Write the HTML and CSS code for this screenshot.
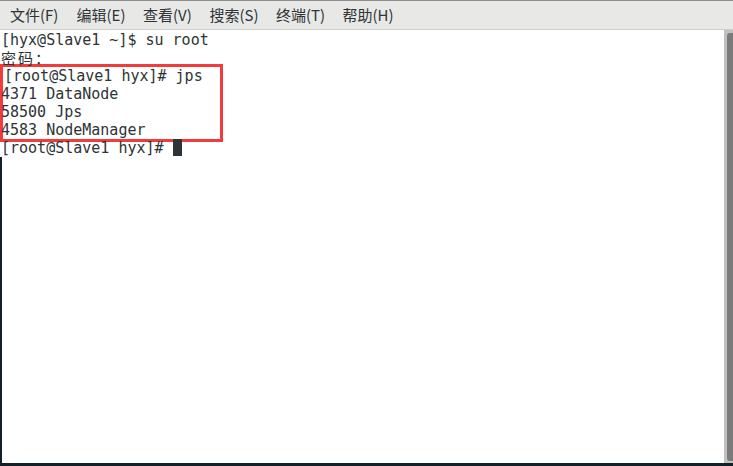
FILE: index.html
```html
<!DOCTYPE html>
<html lang="zh">
<head>
<meta charset="utf-8">
<title>终端</title>
<link rel="stylesheet" href="styles.css">
</head>
<body>
<div class="window">
  <div class="menubar">
    <span class="menu-item">文件(F)</span>
    <span class="menu-item">编辑(E)</span>
    <span class="menu-item">查看(V)</span>
    <span class="menu-item">搜索(S)</span>
    <span class="menu-item">终端(T)</span>
    <span class="menu-item">帮助(H)</span>
  </div>
  <div class="terminal">
    <div class="screen">
      <div class="line">[hyx@Slave1 ~]$ su root</div>
      <div class="line cjk">密码：</div>
      <div class="highlight">
        <div class="line">[root@Slave1 hyx]# jps</div>
        <div class="line">4371 DataNode</div>
        <div class="line">58500 Jps</div>
        <div class="line">4583 NodeManager</div>
      </div>
      <div class="line">[root@Slave1 hyx]# <span class="cursor"></span></div>
    </div>
    <div class="scrollbar"><div class="thumb"></div></div>
  </div>
</div>
<div class="desk-edge"></div>
</body>
</html>
```
FILE: styles.css
```css
html, body {
  margin: 0;
  padding: 0;
}
body {
  width: 733px;
  height: 466px;
  overflow: hidden;
  background: #13202a;
  position: relative;
}
.window {
  height: 463px;
  display: flex;
  flex-direction: column;
  background: #ffffff;
}
.menubar {
  height: 28px;
  border-top: 1px solid #8f8f8f;
  border-bottom: 1px solid #cfcfcd;
  background: #e8e8e7;
  display: flex;
  align-items: center;
  padding-left: 10px;
  gap: 16px;
  font-family: "Noto Sans CJK SC", "Noto Sans", sans-serif;
  font-size: 15px;
  color: #2e3436;
}
.menu-item {
  width: 50.5px;
  white-space: nowrap;
  line-height: 28px;
}
.terminal {
  flex: 1;
  display: flex;
  min-height: 0;
}
.screen {
  flex: 1;
  padding-top: 1px;
  padding-left: 1px;
  font-family: "DejaVu Sans Mono", "Noto Sans CJK SC", monospace;
  font-size: 15px;
  color: #2e3436;
}
.line {
  height: 18px;
  line-height: 18px;
  white-space: pre;
}
.cjk {
  font-family: "Noto Sans CJK SC", sans-serif;
  letter-spacing: 2px;
}
.highlight {
  width: 216px;
  margin-left: -1px;
  border: 3px solid #f43a3a;
  margin-top: -3px;
  margin-bottom: -3px;
  padding-left: 1px;
  margin-right: 0;
}
.highlight .line {
  margin-left: -3px;
}
.highlight .line:first-child {
  padding-left: 3px;
}
.cursor {
  display: inline-block;
  width: 9px;
  height: 17px;
  background: #2e3436;
  vertical-align: top;
}
.scrollbar {
  width: 9px;
  background: #c1c1c0;
  display: flex;
  justify-content: flex-end;
  padding-top: 3px;
  padding-bottom: 2px;
}
.thumb {
  width: 6px;
  background: #7b7b7b;
  border-radius: 3px 0 0 3px;
}
.desk-edge {
  position: absolute;
  left: 0;
  top: 157px;
  width: 2px;
  height: 309px;
  background: #13202a;
}
```
